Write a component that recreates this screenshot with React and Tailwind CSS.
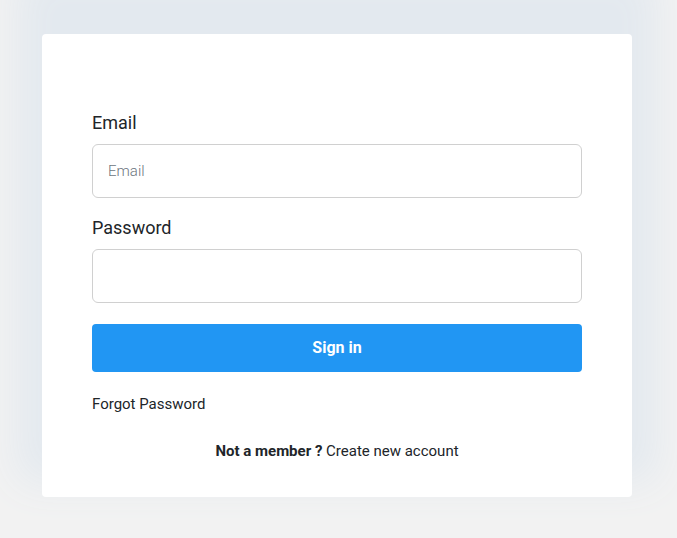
import { useState } from 'react';

export default function App() {
  const [email, setEmail] = useState('');
  const [password, setPassword] = useState('');

  return (
    <div className="min-h-[538px] bg-[#f2f2f2] pt-[34px] font-['Roboto',sans-serif] overflow-hidden">
      <div className="mx-[42px] w-[590px] h-[463px] bg-white rounded-[4px] shadow-[0_-40px_40px_25px_#e3e9ef] px-[50px] pt-[77px]">
        <label className="block text-[18px] leading-[24px] text-[#212529] mb-[9px]">Email</label>
        <input
          type="email"
          value={email}
          onChange={(e) => setEmail(e.target.value)}
          placeholder="Email"
          className="block w-full h-[54px] border border-[#d0d0d0] rounded-[6px] px-[15px] text-[15px] font-light text-[#212529] placeholder:text-[#6c757d] outline-none"
        />

        <label className="block text-[18px] leading-[24px] text-[#212529] mt-[18px] mb-[9px]">Password</label>
        <input
          type="password"
          value={password}
          onChange={(e) => setPassword(e.target.value)}
          className="block w-full h-[54px] border border-[#d0d0d0] rounded-[6px] px-[15px] text-[15px] outline-none"
        />

        <button className="block w-full h-[48px] mt-[21px] bg-[#2196f3] rounded-[4px] text-white font-bold text-[16px]">
          Sign in
        </button>

        <div className="mt-[22px] text-[15px] leading-[20px] text-[#212529]">Forgot Password</div>

        <div className="mt-[27px] text-[15px] leading-[20px] text-[#212529] text-center">
          <span className="font-bold">Not a member ?</span> Create new account
        </div>
      </div>
    </div>
  );
}
